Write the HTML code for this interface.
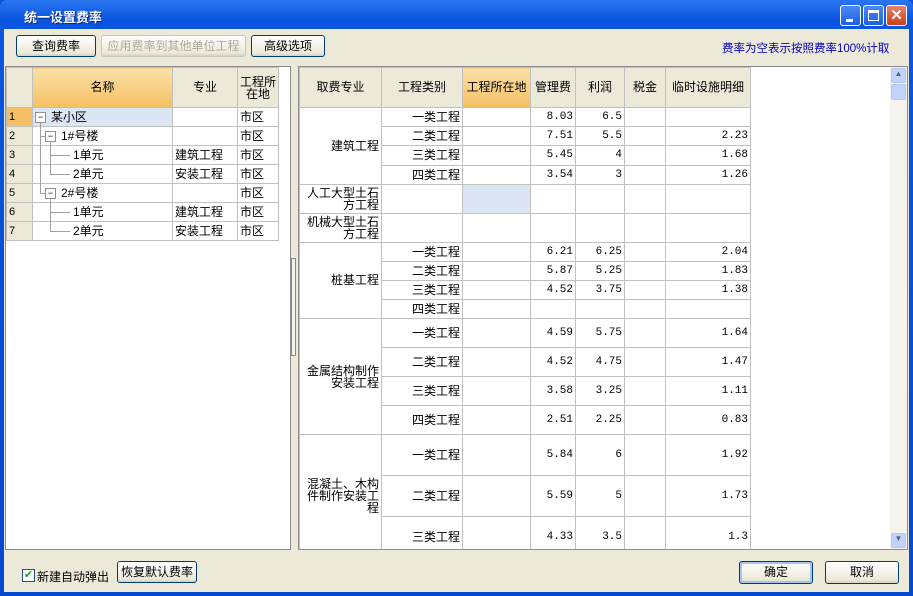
<!DOCTYPE html>
<html><head><meta charset="utf-8"><style>
*{box-sizing:border-box;margin:0;padding:0}
body{width:913px;height:596px;overflow:hidden;font-family:"Liberation Sans","Noto Sans CJK SC",sans-serif;font-size:12px;color:#000;background:#0a4fd8;position:relative}
.win{position:absolute;left:0;top:0;width:913px;height:596px;background:linear-gradient(#2a76f0,#0a55e0 20px,#0548d0);border-radius:7px 7px 0 0}
.title{position:absolute;left:24px;top:7px;color:#fff;font-weight:bold;font-size:13px;text-shadow:1px 1px #0a2a80}
.body{position:absolute;left:4px;top:29px;width:905px;height:563px;background:#ece9d8}
.btn{position:absolute;height:22px;border:1px solid #003c74;border-radius:3px;background:linear-gradient(#fff,#ece9d8 85%,#d6d0c0);text-align:center;line-height:20px;font-size:12px}
.dis{border-color:#c9c7ba;color:#aca899}
.tb{position:absolute;background:#fff;border:1px solid #8c8c8c;overflow:hidden}
table{border-collapse:collapse;table-layout:fixed;position:absolute;left:0;top:0}
td{border:1px solid #c0c0c0;padding:0 2px;overflow:hidden;white-space:nowrap;font-size:12px;line-height:13px}
.h td{background:#ece9d8;text-align:center;height:40px}
td.or{background:linear-gradient(#fbe0a8,#f5c063)!important}
.n{text-align:right;font-family:"Liberation Mono",monospace;font-size:11px}
.r{text-align:right}
.hl{background:#dde6f5}
.wb{position:absolute;top:5px;width:21px;height:21px;border:1px solid #fff;border-radius:3px;background:linear-gradient(#4a8af8,#1f5fe0)}
.ln{position:absolute;background:#a0a0a0}
.bx{position:absolute;width:11px;height:11px;border:1px solid #909090;background:#fff;font-size:9px;line-height:8px;text-align:center}
</style></head><body>
<div class="win">
<div class="title">统一设置费率</div>
<div class="wb" style="left:840px"><div style="position:absolute;left:5px;top:13px;width:7px;height:3px;background:#fff"></div></div>
<div class="wb" style="left:863px"><div style="position:absolute;left:4px;top:4px;width:11px;height:11px;border:1px solid #fff;border-top-width:3px"></div></div>
<div class="wb" style="left:886px;background:linear-gradient(#e8826a,#c8401c);color:#fff;font-weight:bold;font-size:15px;text-align:center;line-height:19px">✕</div>
<div class="body">
<div class="btn" style="left:12px;top:6px;width:80px">查询费率</div>
<div class="btn dis" style="left:97px;top:6px;width:145px">应用费率到其他单位工程</div>
<div class="btn" style="left:247px;top:6px;width:74px">高级选项</div>
<div style="position:absolute;left:718px;top:11px;color:#0000c0;font-size:11.5px">费率为空表示按照费率100%计取</div>

<div class="tb" style="left:1px;top:37px;width:286px;height:484px">
<table style="width:272px">
<colgroup><col style="width:26px"><col style="width:140px"><col style="width:65px"><col style="width:41px"></colgroup>
<tr class="h"><td></td><td class="or">名称</td><td>专业</td><td style="line-height:12px">工程所<br>在地</td></tr>
<tr style="height:19px"><td style="background:#f5c063;font-size:11px">1</td><td class="hl" style="padding-left:18px">某小区</td><td></td><td>市区</td></tr>
<tr style="height:19px"><td style="background:#ece9d8;font-size:11px">2</td><td style="padding-left:28px">1#号楼</td><td></td><td>市区</td></tr>
<tr style="height:19px"><td style="background:#ece9d8;font-size:11px">3</td><td style="padding-left:40px">1单元</td><td>建筑工程</td><td>市区</td></tr>
<tr style="height:19px"><td style="background:#ece9d8;font-size:11px">4</td><td style="padding-left:40px">2单元</td><td>安装工程</td><td>市区</td></tr>
<tr style="height:19px"><td style="background:#ece9d8;font-size:11px">5</td><td style="padding-left:28px">2#号楼</td><td></td><td>市区</td></tr>
<tr style="height:19px"><td style="background:#ece9d8;font-size:11px">6</td><td style="padding-left:40px">1单元</td><td>建筑工程</td><td>市区</td></tr>
<tr style="height:19px"><td style="background:#ece9d8;font-size:11px">7</td><td style="padding-left:40px">2单元</td><td>安装工程</td><td>市区</td></tr>
</table></div>
<div style="position:absolute;left:287px;top:229px;width:5px;height:98px;border:1px solid #888;background:#f4f2e8"></div>

<div class="tb" style="left:294px;top:37px;width:610px;height:484px">
<table style="width:451px">
<colgroup><col style="width:82px"><col style="width:81px"><col style="width:68px"><col style="width:45px"><col style="width:49px"><col style="width:41px"><col style="width:85px"></colgroup>
<tr class="h"><td>取费专业</td><td>工程类别</td><td class="or">工程所在地</td><td>管理费</td><td>利润</td><td>税金</td><td>临时设施明细</td></tr>
<tr style="height:19px"><td rowspan="4" class="r">建筑工程</td><td class="r">一类工程</td><td></td><td class="n">8.03</td><td class="n">6.5</td><td></td><td></td></tr>
<tr style="height:19px"><td class="r">二类工程</td><td></td><td class="n">7.51</td><td class="n">5.5</td><td></td><td class="n">2.23</td></tr>
<tr style="height:20px"><td class="r">三类工程</td><td></td><td class="n">5.45</td><td class="n">4</td><td></td><td class="n">1.68</td></tr>
<tr style="height:19px"><td class="r">四类工程</td><td></td><td class="n">3.54</td><td class="n">3</td><td></td><td class="n">1.26</td></tr>
<tr style="height:29px"><td class="r" style="white-space:normal;line-height:12px">人工大型土石方工程</td><td></td><td class="hl"></td><td></td><td></td><td></td><td></td></tr>
<tr style="height:29px"><td class="r" style="white-space:normal;line-height:12px">机械大型土石方工程</td><td></td><td></td><td></td><td></td><td></td><td></td></tr>
<tr style="height:19px"><td rowspan="4" class="r">桩基工程</td><td class="r">一类工程</td><td></td><td class="n">6.21</td><td class="n">6.25</td><td></td><td class="n">2.04</td></tr>
<tr style="height:19px"><td class="r">二类工程</td><td></td><td class="n">5.87</td><td class="n">5.25</td><td></td><td class="n">1.83</td></tr>
<tr style="height:19px"><td class="r">三类工程</td><td></td><td class="n">4.52</td><td class="n">3.75</td><td></td><td class="n">1.38</td></tr>
<tr style="height:19px"><td class="r">四类工程</td><td></td><td></td><td></td><td></td><td></td></tr>
<tr style="height:29px"><td rowspan="4" class="r" style="white-space:normal;line-height:12px">金属结构制作安装工程</td><td class="r">一类工程</td><td></td><td class="n">4.59</td><td class="n">5.75</td><td></td><td class="n">1.64</td></tr>
<tr style="height:29px"><td class="r">二类工程</td><td></td><td class="n">4.52</td><td class="n">4.75</td><td></td><td class="n">1.47</td></tr>
<tr style="height:29px"><td class="r">三类工程</td><td></td><td class="n">3.58</td><td class="n">3.25</td><td></td><td class="n">1.11</td></tr>
<tr style="height:29px"><td class="r">四类工程</td><td></td><td class="n">2.51</td><td class="n">2.25</td><td></td><td class="n">0.83</td></tr>
<tr style="height:41px"><td rowspan="3" class="r" style="white-space:normal;line-height:12px">混凝土、木构件制作安装工程</td><td class="r">一类工程</td><td></td><td class="n">5.84</td><td class="n">6</td><td></td><td class="n">1.92</td></tr>
<tr style="height:41px"><td class="r">二类工程</td><td></td><td class="n">5.59</td><td class="n">5</td><td></td><td class="n">1.73</td></tr>
<tr style="height:41px"><td class="r">三类工程</td><td></td><td class="n">4.33</td><td class="n">3.5</td><td></td><td class="n">1.3</td></tr>
</table>
<div style="position:absolute;right:0;top:0;width:17px;height:482px;background:#f4f3ee">
<div style="position:absolute;left:1px;top:1px;width:15px;height:15px;background:#c1d3fb;border:1px solid #b5c8f0;border-radius:2px;font-size:8px;text-align:center;color:#4d6185">▲</div>
<div style="position:absolute;left:1px;top:17px;width:15px;height:16px;background:#c1d3fb;border:1px solid #b5c8f0;border-radius:2px"></div>
<div style="position:absolute;left:1px;bottom:1px;width:15px;height:15px;background:#c1d3fb;border:1px solid #b5c8f0;border-radius:2px;font-size:8px;text-align:center;color:#4d6185">▼</div>
</div>
</div>

<div style="position:absolute;left:18px;top:540px;width:13px;height:13px;border:1px solid #1c5180;background:#fff;color:#21a121;font-size:11px;line-height:11px;text-align:center">✔</div>
<div style="position:absolute;left:33px;top:539px">新建自动弹出</div>
<div class="btn" style="left:113px;top:532px;width:80px;border-radius:3px">恢复默认费率</div>
<div class="btn" style="left:735px;top:532px;width:74px;height:23px;border-color:#003c74;box-shadow:inset 0 0 0 2px #a8c4f0">确定</div>
<div class="btn" style="left:821px;top:532px;width:74px;height:23px">取消</div>
</div>
<!-- tree lines (page coords) -->
<div class="ln" style="left:40px;top:123px;width:1px;height:70px"></div>
<div class="ln" style="left:40px;top:136px;width:5px;height:1px"></div>
<div class="ln" style="left:40px;top:193px;width:5px;height:1px"></div>
<div class="ln" style="left:50px;top:142px;width:1px;height:32px"></div>
<div class="ln" style="left:50px;top:155px;width:20px;height:1px"></div>
<div class="ln" style="left:50px;top:174px;width:20px;height:1px"></div>
<div class="ln" style="left:50px;top:199px;width:1px;height:33px"></div>
<div class="ln" style="left:50px;top:212px;width:20px;height:1px"></div>
<div class="ln" style="left:50px;top:231px;width:20px;height:1px"></div>
<div class="bx" style="left:35px;top:112px">−</div>
<div class="bx" style="left:45px;top:131px">−</div>
<div class="bx" style="left:45px;top:188px">−</div>
</div>
</body></html>
